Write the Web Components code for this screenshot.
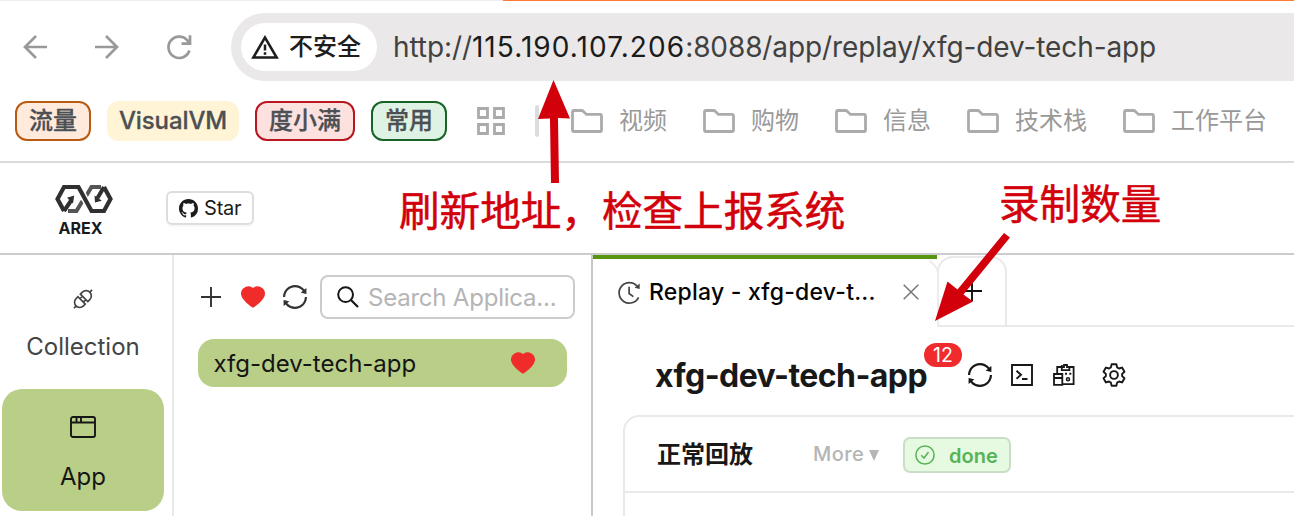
<!DOCTYPE html>
<html lang="zh"><head><meta charset="utf-8"><title>AREX</title>
<style>
body{margin:0;width:1294px;height:516px;overflow:hidden;background:#fff;font-family:Inter,"Noto Sans CJK SC",sans-serif}
</style></head><body><arex-window></arex-window>
<script>
const icons={
back:['0 0 24 24','<path d="M24 12H2M13 1 2 12 13 23" fill="none" stroke="currentColor" stroke-width="2.7"/>'],
forward:['0 0 24 24','<path d="M0 12H22M11 1 22 12 11 23" fill="none" stroke="currentColor" stroke-width="2.7"/>'],
reload:['0 0 24 24','<path d="M22.4 15.5A10.7 10.7 0 1 1 20.5 5.5L22.4 8.4M23 .2V8.6H14.5" fill="none" stroke="currentColor" stroke-width="2.7"/>'],
warn:['0 0 28 24','<path d="M14 2.5 2.3 22.5H25.7Z" fill="none" stroke="currentColor" stroke-width="2.5"/><path d="M14 9.5V15.5M14 17.3V19.8" stroke="currentColor" stroke-width="2.5"/>'],
grid:['0 0 28 28','<path d="M1.5 1.5h9v9h-9zM17.5 1.5h9v9h-9zM1.5 17.5h9v9h-9zM17.5 17.5h9v9h-9z" fill="none" stroke="currentColor" stroke-width="2.8"/>'],
folder:['0 0 32 24','<path d="M3 1.5H10.6Q11.6 1.5 12.5 2.4L15.5 5.4H29Q30.5 5.4 30.5 7V21Q30.5 22.5 29 22.5H3Q1.5 22.5 1.5 21V3Q1.5 1.5 3 1.5Z" fill="none" stroke="currentColor" stroke-width="2.8"/>'],
logo:['0 0 58 28','<g fill="none"><path d="M27.5 16 21.5 26H13M30.5 12 36.5 2H46" stroke="#555" stroke-width="4"/><path d="M24 2 36 26" stroke="#fff" stroke-width="7"/><path d="M9 26 2.5 14 9 2H23.5L36.5 26H49L55.5 14 49 2" stroke="#303030" stroke-width="4.2"/><path d="M9 26 16.5 15M49 2 42.5 13" stroke="#303030" stroke-width="4"/></g><path d="M19.2 10.5 12 12.8 18 18.5ZM40 17.5 39.5 10.5 46.8 15.8Z" fill="#303030"/>'],
github:['0 0 16 16','<path fill="currentColor" d="M8 0C3.58 0 0 3.58 0 8c0 3.54 2.29 6.53 5.47 7.59.4.07.55-.17.55-.38 0-.19-.01-.82-.01-1.49-2.01.37-2.53-.49-2.69-.94-.09-.23-.48-.94-.82-1.13-.28-.15-.68-.52-.01-.53.63-.01 1.08.58 1.23.82.72 1.21 1.87.87 2.33.66.07-.52.28-.87.51-1.07-1.78-.2-3.64-.89-3.64-3.95 0-.87.31-1.59.82-2.15-.08-.2-.36-1.02.08-2.12 0 0 .67-.21 2.2.82.64-.18 1.32-.27 2-.27.68 0 1.36.09 2 .27 1.53-1.04 2.2-.82 2.2-.82.44 1.1.16 1.92.08 2.12.51.56.82 1.27.82 2.15 0 3.07-1.87 3.75-3.65 3.95.29.25.54.73.54 1.48 0 1.07-.01 1.93-.01 2.2 0 .21.15.46.55.38A8.013 8.013 0 0016 8c0-4.42-3.58-8-8-8z"/>'],
api:['0 0 24 24','<g transform="rotate(45 12 12)" fill="none" stroke="currentColor" stroke-width="1.8"><path d="M6.3 10.3V7.2A5.7 5.7 0 0 1 17.7 7.2V10.3ZM6.3 14.2V17A5.7 5.7 0 0 0 17.7 17V14.2ZM12-2V1.5M12 22.5V26M9.4 10.3V14.2M14.6 10.3V14.2"/></g>'],
appwin:['0 0 26 22','<rect x="1" y="1" width="24" height="20" rx="2" fill="none" stroke="currentColor" stroke-width="1.9"/><path d="M1 6.5H25M6.5 1V6.5M11 1V6.5" stroke="currentColor" stroke-width="1.9"/>'],
plus:['0 0 20 20','<path d="M10 0V20M0 10H20" stroke="currentColor" stroke-width="1.9"/>'],
heart:['80 112 864 800','<path fill="currentColor" d="M923 283.6a260.04 260.04 0 00-56.9-82.8 264.4 264.4 0 00-84-55.5A265.34 265.34 0 00679.7 125c-49.3 0-97.4 13.5-139.2 39-10 6.1-19.5 12.8-28.5 20.1-9-7.3-18.5-14-28.5-20.1-41.8-25.5-89.9-39-139.2-39-35.5 0-69.9 6.8-102.4 20.3-31.4 13-59.7 31.7-84 55.5a258.44 258.44 0 00-56.9 82.8c-13.9 32.3-21 66.6-21 101.9 0 33.3 6.8 68 20.3 103.3 11.3 29.5 27.5 60.1 48.2 91 32.8 48.9 77.9 99.9 133.9 151.6 92.8 85.7 184.7 144.9 188.6 147.3l23.7 15.2c10.5 6.7 24 6.7 34.5 0l23.7-15.2c3.9-2.5 95.7-61.6 188.6-147.3 56-51.7 101.1-102.7 133.9-151.6 20.7-30.9 37-61.5 48.2-91 13.5-35.3 20.3-70 20.3-103.3.1-35.3-7-69.6-20.9-101.9z"/>'],
sync:['92 92 840 840','<path fill="currentColor" d="M168 504.2c1-43.7 10-86.1 26.9-126 17.3-41 42.1-77.7 73.7-109.4S337 212.3 378 195c42.4-17.9 87.4-27 133.9-27s91.5 9.1 133.8 27A341.5 341.5 0 01755 268.8c9.9 9.9 19.2 20.4 27.8 31.4l-60.2 47a8 8 0 003 14.1l175.7 43c5 1.2 9.9-2.6 9.9-7.7l.8-180.9c0-6.7-7.7-10.5-12.9-6.3l-56.4 44.1C765.8 155.1 646.2 92 511.8 92 282.7 92 96.3 275.6 92 503.8a8 8 0 008 8.2h60c4.4 0 7.9-3.5 8-7.8zm756 7.8h-60c-4.4 0-7.9 3.5-8 7.8-1 43.7-10 86.1-26.9 126-17.3 41-42.1 77.8-73.7 109.4A342.45 342.45 0 01512.1 856a342.24 342.24 0 01-243.2-100.8c-9.9-9.9-19.2-20.4-27.8-31.4l60.2-47a8 8 0 00-3-14.1l-175.7-43c-5-1.2-9.9 2.6-9.9 7.7l-.7 181c0 6.7 7.7 10.5 12.9 6.3l56.4-44.1C258.2 868.9 377.8 932 512.2 932c229.2 0 415.5-183.7 419.8-411.8a8 8 0 00-8-8.2z"/>'],
search:['0 0 22 22','<circle cx="8.6" cy="8.6" r="7.4" fill="none" stroke="currentColor" stroke-width="2"/><path d="M14 14 21 21" stroke="currentColor" stroke-width="2.2"/>'],
history:['0 0 24 24','<path d="M21.5 17A10.7 10.7 0 1 1 20 5.5M11.6 6V13L16 16.3" fill="none" stroke="currentColor" stroke-width="1.8"/><path d="M22.6 2.5V8.3L17.3 7Z" fill="currentColor"/>'],
close:['0 0 16 16','<path d="M.7.7 15.3 15.3M15.3.7.7 15.3" stroke="currentColor" stroke-width="1.5"/>'],
code:['0 0 22 22','<path d="M1 1H21V21H1ZM5.5 6.8 10 10.8 5.5 14.8M11 15H16.5" fill="none" stroke="currentColor" stroke-width="1.9"/>'],
report:['0 0 22 22','<path d="M4.2 9.5V3H8.5M16.5 3H20.6V20.2H10M8.8 1V6.2H16.4V3H14V1H11V3H8.8M1 10H9.3V20.8H1ZM1 14H9.3" fill="none" stroke="currentColor" stroke-width="1.8"/><circle cx="15" cy="15.3" r="1.5" fill="none" stroke="currentColor" stroke-width="1.5"/><path d="M12 9.7H14M16.3 9.7H18.3" stroke="currentColor" stroke-width="1.9"/>'],
gear:['-12 -12 24 24','<path d="M-2.4-10.7H2.4L3.1-7.6 5.03-6.48 8.07-7.43 10.47-3.27 8.13-1.12V1.12L10.47 3.27 8.07 7.43 5.03 6.48 3.1 7.6 2.4 10.7H-2.4L-3.1 7.6-5.03 6.48-8.07 7.43-10.47 3.27-8.13 1.12V-1.12L-10.47-3.27-8.07-7.43-5.03-6.48-3.1-7.6Z" fill="none" stroke="currentColor" stroke-width="1.9" stroke-linejoin="round"/><circle r="3.9" fill="none" stroke="currentColor" stroke-width="1.9"/>'],
check:['0 0 20 20','<circle cx="10" cy="10" r="9.1" fill="none" stroke="currentColor" stroke-width="1.5"/><path d="M6.2 10.3 9 13 13.5 7" fill="none" stroke="currentColor" stroke-width="1.5"/>'],
caret:['0 0 10 11','<path d="M0 0H10L5 11Z" fill="currentColor"/>']
};
function define(name,css,html){
  customElements.define(name,class extends HTMLElement{
    constructor(){super();this.attachShadow({mode:'open'}).innerHTML=`<style>*{box-sizing:border-box}:host{display:block;box-sizing:border-box}${css}</style>${typeof html==='function'?html(this):html}`}
  });
}
const icon=(n,w,h,style='')=>`<ui-icon name="${n}" w="${w}" h="${h||w}" style="${style}"></ui-icon>`;
define('ui-icon',':host{flex:none}svg{display:block;overflow:visible}',e=>{
  const [box,body]=icons[e.getAttribute('name')];
  return `<svg width="${e.getAttribute('w')}" height="${e.getAttribute('h')}" viewBox="${box}" preserveAspectRatio="none">${body}</svg>`;
});
define('browser-bar',`
:host{height:100px;padding-top:1px;background:linear-gradient(90deg,#efeeee 503px,#ff7b33 503px) 0 0/100% 1px no-repeat}
.row{height:92px;display:flex;align-items:center;padding-left:23px;background:#fff;color:#999;border-top-left-radius:8px}
.omni{margin-left:39px;flex:1;height:68px;border-radius:34px 0 0 34px;background:#eae8e8;display:flex;align-items:center;padding-left:10px;white-space:nowrap}
.chip{width:136px;height:48px;border-radius:24px;background:#fff;display:flex;align-items:center;padding-left:10px;color:#1d1d1d;font-size:24px;font-weight:500}
.chip span{margin-left:10px;line-height:48px;height:48px}
.url{margin-left:16px;font-size:28px;color:#414141;letter-spacing:-.1px}.url b{font-weight:400;color:#1b1b1b;letter-spacing:1.08px}`,
`<div class="row">${icon('back',24)}${icon('forward',24,24,'margin-left:48px')}${icon('reload',24,24,'margin-left:48px;margin-right:1px')}
<div class="omni"><div class="chip">${icon('warn',28,24)}<span>不安全</span></div><div class="url">http://<b>115.190.107.206</b>:8088/app/replay/xfg-dev-tech-app</div></div></div>`);
define('bookmark-tag',`:host{width:var(--w);height:40px;border-radius:12px;border:2px solid var(--edge);background:var(--fill);color:#4c5054;font-weight:500;font-size:24px;line-height:35px;text-align:center;white-space:nowrap;margin-right:16px;flex:none;-webkit-text-stroke:.3px #4c5054}`,'<slot></slot>');
define('bookmark-folder',`:host{display:flex;align-items:center;color:#ababab;margin-right:36px;flex:none}span{margin-left:16px;font-size:24px;height:40px;line-height:39px;color:#999;white-space:nowrap}`,`${icon('folder',32,24)}<span><slot></slot></span>`);
define('bookmark-bar',`:host{height:63px;display:flex;align-items:flex-start;padding:1px 0 0 15px;border-bottom:2px solid #dadcdb}
.grid{color:#ababab;margin:6px 30px 0 14px}.sep{width:4px;height:32px;border-radius:2px;background:#ddd;margin:4px 32px 0 0;flex:none}.vm{letter-spacing:-.1px;line-height:36px}`,
`<bookmark-tag style="--w:76px;--edge:#b95a12;--fill:#ffeadc">流量</bookmark-tag><bookmark-tag class="vm" style="--w:132px;--edge:#fff4d5;--fill:#fff4d5">VisualVM</bookmark-tag><bookmark-tag style="--w:100px;--edge:#bb1520;--fill:#fce1df">度小满</bookmark-tag><bookmark-tag style="--w:76px;--edge:#176426;--fill:#dff3e4">常用</bookmark-tag>
<div class="grid">${icon('grid',28)}</div><div class="sep"></div>
<bookmark-folder>视频</bookmark-folder><bookmark-folder>购物</bookmark-folder><bookmark-folder>信息</bookmark-folder><bookmark-folder>技术栈</bookmark-folder><bookmark-folder>工作平台</bookmark-folder>`);
define('app-header',`:host{height:92px;border-bottom:2px solid #ccc;display:flex;padding-left:55px}
.brand{width:58px;padding-top:22px}.brand div{font-size:16px;font-weight:700;line-height:18px;margin-top:6px;margin-left:3.5px;color:#1a1a1a}
.star{margin:28px 0 0 53px;width:88px;height:34px;border:2px solid #ddd;border-radius:6px;box-shadow:0 2px 1px #f7f7f7;display:flex;align-items:center;padding-left:11px;color:#1c1c1c;font-size:20px;letter-spacing:-.2px}.star span{margin-left:6px}`,
`<div class="brand">${icon('logo',58,28)}<div>AREX</div></div><div class="star">${icon('github',19,19)}<span>Star</span></div>`);
define('nav-item',`:host{width:162px;height:122px;margin-left:2px;border-radius:20px;display:flex;flex-direction:column;align-items:center;padding-top:24px;color:#444;font-size:24px}
:host([active]){background:#b9cf87;color:#161616}.i{height:28px;display:flex;align-items:center}.t{margin-top:18px;line-height:32px}:host([active]) .t{margin-top:20px}`,`<div class="i"><slot name="icon"></slot></div><div class="t"><slot></slot></div>`);
define('side-nav',`:host{width:174px;border-right:2px solid #e9e9e9;padding-top:6px;flex:none}nav-item+nav-item{margin-top:6px}`,
`<nav-item>${icon('api',22).replace('<ui-icon','<ui-icon slot="icon"')}Collection</nav-item><nav-item active>${icon('appwin',26,22).replace('<ui-icon','<ui-icon slot="icon"')}App</nav-item>`);
define('app-list',`:host{width:419px;border-right:2px solid #c8c8c8;padding:20px 16px 0 24px;flex:none}
.tools{display:flex;align-items:center;padding-left:3px;color:#333}
.search{margin-left:13px;width:255px;height:44px;border:2px solid #ccc;border-radius:8px;display:flex;align-items:center;padding-left:15px;color:#161616;font-size:24px}.search span{margin-left:9px;color:#b5b5b5;white-space:nowrap;letter-spacing:-.22px}
.item{margin-top:20px;width:369px;height:48px;border-radius:16px;background:#b9cf87;display:flex;align-items:center;justify-content:space-between;padding:0 32px 0 15.5px;font-size:24px;color:#151515}.red{color:#f02c2a;position:relative;top:-.5px}`,
`<div class="tools">${icon('plus',20)}<span class="red">${icon('heart',24,22,'margin-left:20px')}</span>${icon('sync',24,24,'margin-left:18px')}<div class="search">${icon('search',22)}<span>Search Applica...</span></div></div>
<div class="item"><span class="name">xfg-dev-tech-app</span><span class="red">${icon('heart',24,22)}</span></div>`);
define('tab-strip',`:host{height:72px;display:flex;border-bottom:0}
.tab{width:344px;height:72px;border-top:4px solid #55960e;display:flex;position:relative}
.tab:before{content:"";position:absolute;inset:0 -2px 0 0;border:2px solid #ececec;border-width:2px 2px 0 0;border-radius:0 16px 0 0;clip-path:inset(0 0 0 336px)}
.in{display:flex;align-items:center;width:100%;height:66px;padding-left:25px;color:#454545;font-size:23px;font-weight:500}.in span{margin-left:8px;color:#050505;flex:1;white-space:nowrap;letter-spacing:.22px}
.add{width:70px;margin-top:1px;height:71px;border:2px solid #e9e9e9;border-radius:16px 16px 0 4px;display:flex;justify-content:center;padding-top:23px;color:#111}.rest{flex:1;border-bottom:2px solid #e9e9e9}`,
`<div class="tab"><div class="in">${icon('history',23)}<span>Replay - xfg-dev-t...</span>${icon('close',16,16,'color:#777;margin-right:18px')}</div></div><div class="add">${icon('plus',20)}</div><div class="rest"></div>`);
define('title-bar',`:host{height:88px;display:flex;align-items:center;padding:8px 0 0 62px;color:#181818;position:relative}
h1{margin:0;font-size:32px;font-weight:700;white-space:nowrap;line-height:40px;width:272px;letter-spacing:-.55px;padding-top:2px}
.badge{position:absolute;left:331px;top:16px;width:38px;height:24px;border-radius:12px;background:#ef2b2d;color:#fff;font-size:19.5px;line-height:24px;text-align:center}`,
`<h1>xfg-dev-tech-app</h1><div class="badge">12</div>${icon('sync',24,24,'margin-left:41px')}${icon('code',22,22,'margin-left:19px')}${icon('report',22,22,'margin-left:20px')}${icon('gear',24,24,'margin-left:27px')}`);
define('replay-card',`:host{margin-left:30px;height:110px;border:2px solid #e9e9e9;border-width:2px 0 0 2px;border-radius:16px 0 0 0}
.head{height:76px;border-bottom:2px solid #e9e9e9;display:flex;align-items:center;padding-left:32px;white-space:nowrap}
.name{font-size:24px;font-weight:700;color:#181818;width:156px;line-height:30px;padding-top:2px}.more{font-size:20px;color:#b5b5b5;font-weight:500;width:90px;display:flex;align-items:center;gap:5px;letter-spacing:.4px}
.done{width:108px;height:36px;border:2px solid #c9dec6;border-radius:7px;background:#e6f9e1;color:#56b356;font-size:20px;font-weight:600;display:flex;align-items:center;padding-left:10px;margin-top:2px}.done span{margin-left:14px;line-height:34px;padding-top:2px}`,
`<div class="head"><div class="name">正常回放</div><div class="more"><span>More</span>${icon('caret',10,11,'margin-top:2px')}</div><div class="done">${icon('check',20)}<span>done</span></div></div>`);
define('callout-layer',`:host{position:absolute;inset:0;color:#d1000b;pointer-events:none}p{position:absolute;margin:0;font-size:40.6px;line-height:50px;white-space:nowrap;font-family:"Noto Sans CJK SC",sans-serif;-webkit-text-stroke:.5px #d1000b}svg{position:absolute;inset:0}`,
`<p style="left:399px;top:184px">刷新地址，检查上报系统</p><p style="left:999px;top:177px">录制数量</p><svg width="1294" height="516"><path fill="#d1000b" d="M553.5 80 570 118.5 558 118 559 183H551L550 118.5 538 119ZM935 321 947.5 281.5 957.5 289.5 1004 233 1010 237.5 963.5 294.5 973 301.5Z"/></svg>`);
define('arex-window',`:host{width:1294px;height:516px;position:relative;overflow:hidden}.body{display:flex;height:261px}.main{flex:1;min-width:0}`,
`<browser-bar></browser-bar><bookmark-bar></bookmark-bar><app-header></app-header><div class="body"><side-nav></side-nav><app-list></app-list><div class="main"><tab-strip></tab-strip><title-bar></title-bar><replay-card></replay-card></div></div><callout-layer></callout-layer>`);
</script></body></html>
